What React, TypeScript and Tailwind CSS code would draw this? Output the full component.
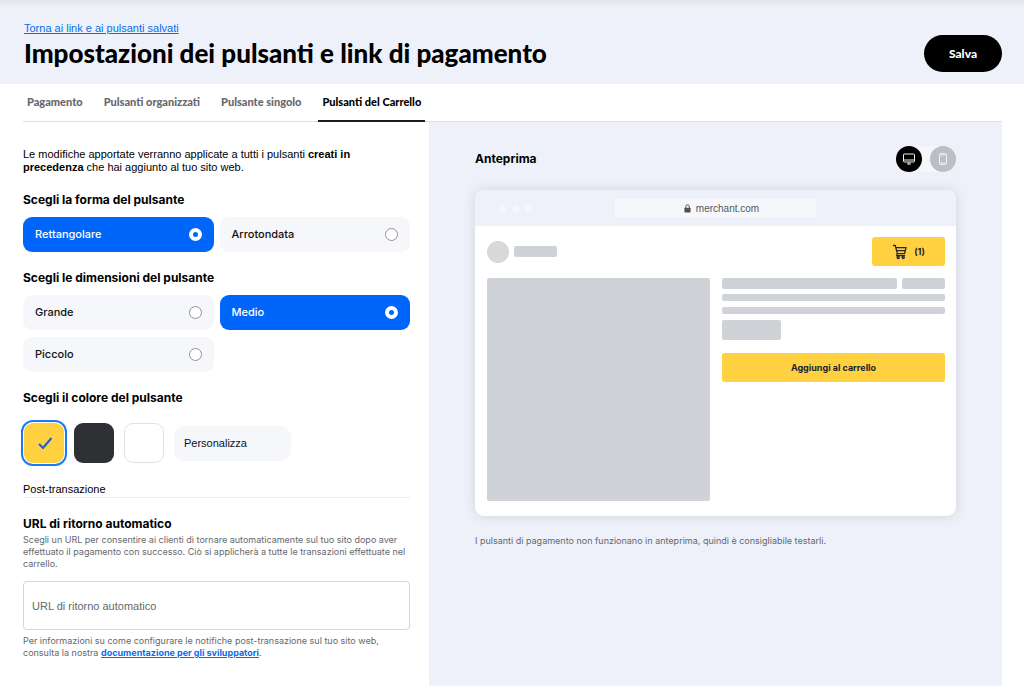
import { useState } from "react";

const tabs = ["Pagamento", "Pulsanti organizzati", "Pulsante singolo", "Pulsanti del Carrello"];

const colors = [
  { name: "Giallo", className: "bg-[#ffd140]" },
  { name: "Nero", className: "bg-[#2f3033]" },
  { name: "Bianco", className: "bg-white border border-[#dfe0e6]" },
];

type OptionGroupProps = {
  title: string;
  name: string;
  options: string[];
  value: string;
  onChange: (value: string) => void;
};

function OptionGroup({ title, name, options, value, onChange }: OptionGroupProps) {
  return (
    <section className="mt-[18px]" role="radiogroup" aria-labelledby={`${name}-title`}>
      <h2 id={`${name}-title`} className="text-[12px] leading-4 font-bold">
        {title}
      </h2>
      <div className="mt-[9px] grid grid-cols-2 gap-x-[6px] gap-y-[7px]">
        {options.map((option) => (
          <label
            key={option}
            className={`flex h-[35px] cursor-pointer items-center justify-between rounded-[9px] px-3 text-[11px] font-medium ${
              value === option ? "bg-[#0066f9] text-white" : "bg-[#f5f7fb] text-[#111]"
            }`}
          >
            {option}
            <input
              type="radio"
              name={name}
              checked={value === option}
              onChange={() => onChange(option)}
              className="size-[13px] appearance-none rounded-full border border-[#8f9297] bg-white checked:border-4 checked:border-white checked:bg-[#0066f9]"
            />
          </label>
        ))}
      </div>
    </section>
  );
}

function DesktopIcon() {
  return (
    <svg viewBox="0 0 12 12" className="size-3" fill="none" stroke="#f2f2f2" strokeWidth="1">
      <rect x="0.5" y="1" width="11" height="8" rx="1" />
      <path d="M0.5 7H11.5M6 9V11M4 11H8" />
    </svg>
  );
}

function MobileIcon() {
  return (
    <svg viewBox="0 0 12 12" className="size-3" fill="none" stroke="#eceef0" strokeWidth="1">
      <rect x="2.5" y="0.5" width="7" height="11" rx="1" />
      <path d="M2.5 2H9.5M2.5 10H9.5" />
    </svg>
  );
}

function CartIcon() {
  return (
    <svg viewBox="0 0 16 16" className="size-4" fill="none" stroke="#2a2530" strokeWidth="1.3" strokeLinecap="round" strokeLinejoin="round">
      <path d="M1.5 1.5H3.3L5.3 9.6H12.6L14 3.6H3.9M4.6 6.6H13.3M5.3 9.6L4.6 11.6H12.6" />
      <circle cx="6.2" cy="13.4" r="1.1" />
      <circle cx="11.2" cy="13.4" r="1.1" />
    </svg>
  );
}

function LockIcon() {
  return (
    <svg viewBox="0 0 8 10" className="h-[9px] w-[7px]" fill="#4f5157">
      <rect x="0.5" y="4" width="7" height="5.5" rx="0.8" />
      <path d="M2 4.5V2.8a2 2 0 0 1 4 0V4.5" fill="none" stroke="#4f5157" strokeWidth="1.1" />
    </svg>
  );
}

function Preview({ radius }: { radius: string }) {
  return (
    <div className="mt-[18px] overflow-hidden rounded-[9px] bg-white shadow-[0_0_12px_rgba(60,60,70,0.16)]">
      <div className="grid h-9 grid-cols-[1fr_201px_1fr] items-center bg-[#eef1f9]">
        <div className="flex gap-[6px] pl-6">
          <span className="size-[7px] rounded-full bg-[#f5f7fb]" />
          <span className="size-[7px] rounded-full bg-[#f5f7fb]" />
          <span className="size-[7px] rounded-full bg-[#f5f7fb]" />
        </div>
        <div className="flex h-[18px] items-center justify-center gap-[5px] rounded-[3px] bg-[#f5f7fb] pl-3 font-['Liberation_Sans',sans-serif] text-[10px] text-[#55575c]">
          <LockIcon />
          merchant.com
        </div>
      </div>

      <div className="py-[11px] pr-[11px] pb-[15px] pl-3">
        <div className="flex items-center">
          <span className="size-[22px] rounded-full bg-[#d7d8d8]" />
          <span className="ml-[5px] h-[11px] w-[43px] rounded-[2px] bg-[#cfd2d6]" />
          <button
            type="button"
            className={`ml-auto flex h-[29px] w-[73px] items-center justify-center gap-[6px] bg-[#ffd140] text-[9px] font-bold text-[#201d30] ${radius}`}
          >
            <CartIcon />
            (1)
          </button>
        </div>
        <div className="mt-3 grid grid-cols-2 gap-3">
          <div className="h-[223px] rounded-[2px] bg-[#cfd2d6]" />
          <div>
            <div className="flex gap-[5px]">
              <div className="h-[11px] flex-1 rounded-[2px] bg-[#cfd2d6]" />
              <div className="h-[11px] w-[43px] rounded-[2px] bg-[#cfd2d6]" />
            </div>
            <div className="mt-[5px] h-[7px] rounded-[2px] bg-[#cfd2d6]" />
            <div className="mt-[6px] h-[7px] rounded-[2px] bg-[#cfd2d6]" />
            <div className="mt-[6px] h-5 w-[59px] rounded-[2px] bg-[#cfd2d6]" />
            <button
              type="button"
              className={`mt-[13px] h-[29px] w-full bg-[#ffd140] text-[9px] font-bold text-[#201d30] ${radius}`}
            >
              Aggiungi al carrello
            </button>
          </div>
        </div>
      </div>
    </div>
  );
}

export default function App() {
  const [tab, setTab] = useState("Pulsanti del Carrello");
  const [shape, setShape] = useState("Rettangolare");
  const [size, setSize] = useState("Medio");
  const [color, setColor] = useState("Giallo");
  const [device, setDevice] = useState("desktop");

  return (
    <div className="flex min-h-screen flex-col bg-white font-['Inter','Liberation_Sans',sans-serif] text-black">
      <header className="flex h-[84px] items-end justify-between bg-[#eef1f9] bg-linear-to-b from-[#e3e4ea] to-[#eef1f9] to-[8px] pr-[22px] pb-3 pl-6">
        <div>
          <a
            href="#"
            className="block font-['Liberation_Sans',sans-serif] text-[11px] leading-3 text-[#0a6cf0] underline"
          >
            Torna ai link e ai pulsanti salvati
          </a>
          <h1 className="font-['Lato',sans-serif] text-[26px] leading-[38px] font-black">
            Impostazioni dei pulsanti e link di pagamento
          </h1>
        </div>
        <button
          type="button"
          className="h-[37px] w-[78px] rounded-full bg-black font-['Lato',sans-serif] text-[12px] font-black text-white"
        >
          Salva
        </button>
      </header>

      <main className="mr-[22px] ml-[23px] flex flex-1 flex-col">
        <div role="tablist" className="flex h-[38px] gap-[13px] border-b border-[#dedfe5]">
          {tabs.map((t) => (
            <button
              key={t}
              type="button"
              role="tab"
              aria-selected={tab === t}
              onClick={() => setTab(t)}
              className={`-mb-px border-b-2 px-1 font-['Lato',sans-serif] text-[11px] font-black ${
                tab === t ? "border-[#1b1b1f] text-black" : "border-transparent text-[#66686d]"
              }`}
            >
              {t}
            </button>
          ))}
        </div>

        <div className="grid flex-1 grid-cols-[406px_1fr]">
          <div className="pt-[26px] pr-[19px] pb-6">
            <p className="font-['Liberation_Sans',sans-serif] text-[11px] leading-[13px]">
              Le modifiche apportate verranno applicate a tutti i pulsanti <b>creati in precedenza</b> che hai aggiunto al
              tuo sito web.
            </p>

            <OptionGroup
              title="Scegli la forma del pulsante"
              name="shape"
              options={["Rettangolare", "Arrotondata"]}
              value={shape}
              onChange={setShape}
            />
            <OptionGroup
              title="Scegli le dimensioni del pulsante"
              name="size"
              options={["Grande", "Medio", "Piccolo"]}
              value={size}
              onChange={setSize}
            />

            <h2 className="mt-[18px] text-[12px] leading-4 font-bold">Scegli il colore del pulsante</h2>
            <div className="mt-[17px] flex items-center gap-[10px] pl-px">
              {colors.map((c) => (
                <button
                  key={c.name}
                  type="button"
                  aria-label={c.name}
                  aria-pressed={color === c.name}
                  onClick={() => setColor(c.name)}
                  className={`flex size-10 items-center justify-center rounded-[9px] ${c.className} ${
                    color === c.name ? "outline-2 outline-offset-1 outline-[#1a7bfa]" : ""
                  }`}
                >
                  {color === c.name && (
                    <svg viewBox="0 0 16 16" className="size-4" fill="none" stroke="#1b62c9" strokeWidth="2">
                      <path d="M3 9L7 13L15.5 3" />
                    </svg>
                  )}
                </button>
              ))}
              <button
                type="button"
                className="h-[35px] w-[117px] rounded-[11px] bg-[#f5f7fb] px-[10px] text-left font-['Liberation_Sans',sans-serif] text-[11px] text-[#111]"
              >
                Personalizza
              </button>
            </div>

            <p className="mt-[18px] border-b border-[#ececf0] font-['Liberation_Sans',sans-serif] text-[11px] leading-4">
              Post-transazione
            </p>

            <h2 className="mt-[18px] text-[12px] leading-4 font-bold">
              <label htmlFor="return-url">URL di ritorno automatico</label>
            </h2>
            <p className="mt-[2px] text-[9px] leading-3 text-[#66686d]">
              Scegli un URL per consentire ai clienti di tornare automaticamente sul tuo sito dopo aver effettuato il
              pagamento con successo. Ciò si applicherà a tutte le transazioni effettuate nel carrello.
            </p>
            <input
              id="return-url"
              type="url"
              placeholder="URL di ritorno automatico"
              className="mt-[11px] block h-[49px] w-full rounded-[4px] border border-[#d5d6dc] px-2 font-['Liberation_Sans',sans-serif] text-[11px] placeholder:text-[#66686d]"
            />
            <p className="mt-[5px] text-[9px] leading-3 text-[#66686d]">
              Per informazioni su come configurare le notifiche post-transazione sul tuo sito web, consulta la nostra{" "}
              <a href="#" className="font-bold text-[#0a6cf0] underline">
                documentazione per gli sviluppatori
              </a>
              .
            </p>
          </div>

          <aside className="bg-[#eef1f9] px-[46px] pt-6">
            <div className="flex items-center justify-between">
              <h2 className="text-[12px] leading-4 font-bold">Anteprima</h2>
              <div className="flex h-[26px] w-[60px] justify-between rounded-full bg-[#f5f7fb]">
                <button
                  type="button"
                  aria-label="Desktop"
                  onClick={() => setDevice("desktop")}
                  className={`flex size-[26px] items-center justify-center rounded-full ${
                    device === "desktop" ? "bg-black" : "bg-[#b9bfc5]"
                  }`}
                >
                  <DesktopIcon />
                </button>
                <button
                  type="button"
                  aria-label="Cellulare"
                  onClick={() => setDevice("mobile")}
                  className={`flex size-[26px] items-center justify-center rounded-full ${
                    device === "mobile" ? "bg-black" : "bg-[#b9bfc5]"
                  }`}
                >
                  <MobileIcon />
                </button>
              </div>
            </div>
            <Preview radius={shape === "Rettangolare" ? "rounded-[3px]" : "rounded-full"} />
            <p className="mt-[19px] text-[9px] leading-3 text-[#66686d]">
              I pulsanti di pagamento non funzionano in anteprima, quindi è consigliabile testarli.
            </p>
          </aside>
        </div>
      </main>
    </div>
  );
}
